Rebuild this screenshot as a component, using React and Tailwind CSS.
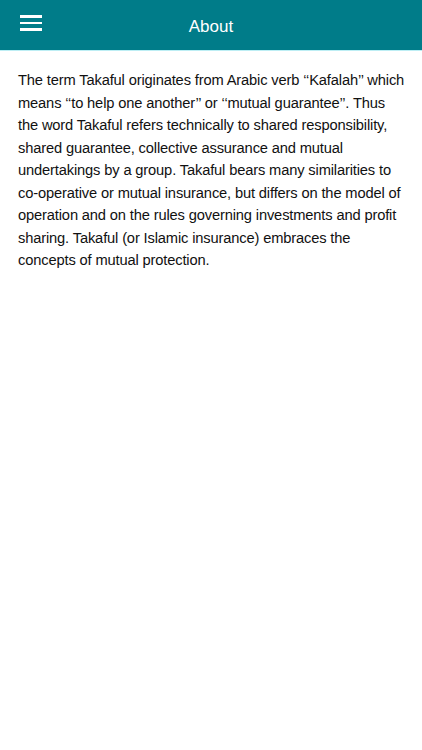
import React from 'react';

const lines = [
  'The term Takaful originates from Arabic verb ‘‘Kafalah’’ which',
  'means ‘‘to help one another’’ or ‘‘mutual guarantee’’. Thus',
  'the word Takaful refers technically to shared responsibility,',
  'shared guarantee, collective assurance and mutual',
  'undertakings by a group. Takaful bears many similarities to',
  'co-operative or mutual insurance, but differs on the model of',
  'operation and on the rules governing investments and profit',
  'sharing. Takaful (or Islamic insurance) embraces the',
  'concepts of mutual protection.',
];

export default function App() {
  return (
    <div className="min-h-[750px] bg-white" style={{ fontFamily: '"Liberation Sans", Arial, sans-serif' }}>
      {/* Header */}
      <div className="relative flex h-[50px] items-center justify-center bg-[#007c89]">
        <button className="absolute left-[20px] top-[15px] flex w-[22px] flex-col gap-[4px]">
          <span className="block h-[2.5px] w-full bg-white" />
          <span className="block h-[2.5px] w-full bg-white" />
          <span className="block h-[2.5px] w-full bg-white" />
        </button>
        <h1 className="mt-[3px] text-[17px] text-white">About</h1>
      </div>
      <div className="h-px bg-[#bdeef4]" />

      {/* Body */}
      <div className="pl-[18px] pr-[10px] pt-[18px]">
        <p className="text-[14.7px] leading-[22.5px] tracking-[-0.15px] text-[#111]">
          {lines.map((l, i) => (
            <span key={i} className="block whitespace-nowrap">{l}</span>
          ))}
        </p>
      </div>
    </div>
  );
}
